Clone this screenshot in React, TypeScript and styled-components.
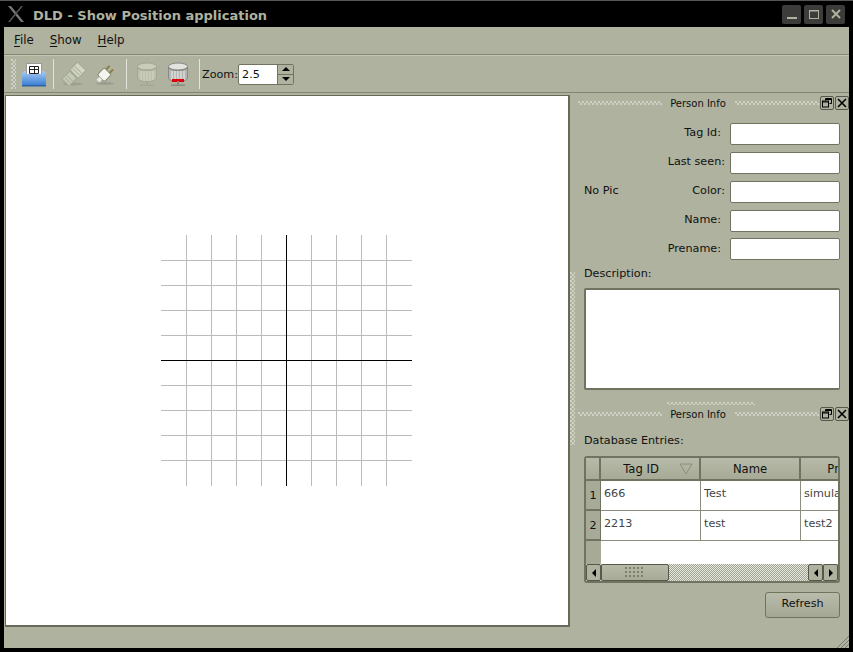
import * as React from "react";
import styled, { createGlobalStyle } from "styled-components";

const Global = createGlobalStyle`
  html, body { margin: 0; padding: 0; background: #000; }
  * { box-sizing: border-box; }
`;

const BG = "#aeb29f";

const Win = styled.div`
  width: 853px;
  height: 652px;
  background: #000;
  border-top: 1px solid #555;
  display: flex;
  flex-direction: column;
  font-family: "DejaVu Sans", sans-serif;
  font-size: 11.2px;
  color: #111;
  overflow: hidden;
`;

const TitleBar = styled.div`
  height: 26px;
  flex: none;
  display: flex;
  align-items: center;
  padding: 0 8px 0 7px;
  color: #aeb29f;
`;

const TitleText = styled.div`
  font-weight: bold;
  font-size: 13px;
  margin: 2px 0 0 8px;
`;

const WinButtons = styled.div`
  margin-left: auto;
  display: flex;
  gap: 3px;
`;

const WinButton = styled.div`
  width: 19px;
  height: 19px;
  background: #3c3c3a;
  border-radius: 2px;
  display: flex;
  align-items: center;
  justify-content: center;
`;

const Body = styled.div`
  flex: 1;
  margin: 0 4px 4px 4px;
  background: ${BG};
  display: flex;
  flex-direction: column;
  min-height: 0;
  position: relative;
`;

const MenuBar = styled.div`
  height: 28px;
  flex: none;
  display: flex;
  align-items: center;
  gap: 16px;
  padding: 0 0 2px 10px;
  border-bottom: 1px solid #82866f;
  box-shadow: 0 1px 0 #c4c7b7;
`;

const MenuItem = styled.span`
  font-size: 11.8px;
  & u { text-underline-offset: 2px; }
`;

const ToolBar = styled.div`
  height: 37px;
  flex: none;
  display: flex;
  align-items: center;
  padding-left: 7px;
  border-bottom: 1px solid #82866f;
  margin-top: 1px;
`;

const Grip = styled.div`
  background-image:
    radial-gradient(circle at 1px 1px, #d0d3c4 0.7px, transparent 0.9px),
    radial-gradient(circle at 3px 3px, #d0d3c4 0.7px, transparent 0.9px);
  background-size: 4px 4px;
`;

const ToolGrip = styled(Grip)`
  width: 5px;
  height: 30px;
`;

const ToolBtn = styled.div<{ $w?: number }>`
  width: ${(p) => p.$w ?? 31.5}px;
  height: 32px;
  display: flex;
  align-items: center;
  justify-content: center;
`;

const ToolSep = styled.div`
  width: 1px;
  height: 30px;
  background: #e3e5da;
  margin: 0 4px 0 5px;
`;

const ZoomLabel = styled.span`
  margin-left: -2px;
`;

const Spin = styled.div`
  width: 56px;
  height: 21px;
  display: flex;
  border: 1px solid #6f7360;
  border-radius: 2px;
  background: #fff;
`;

const SpinValue = styled.div`
  flex: 1;
  padding: 2px 0 0 3px;
  line-height: 15px;
`;

const SpinArrows = styled.div`
  width: 16px;
  display: flex;
  flex-direction: column;
  background: ${BG};
  border-left: 1px solid #6f7360;
`;

const SpinArrow = styled.div<{ $down?: boolean }>`
  flex: 1;
  display: flex;
  align-items: center;
  justify-content: center;
  border-top: ${(p) => (p.$down ? "1px solid #6f7360" : "none")};
  &::after {
    content: "";
    border-left: 4px solid transparent;
    border-right: 4px solid transparent;
    ${(p) => (p.$down ? "border-top: 4px solid #000;" : "border-bottom: 4px solid #000;")}
  }
`;

const Main = styled.div`
  flex: 1;
  display: flex;
  min-height: 0;
  padding: 2px 0 0 1px;
`;

const Canvas = styled.div`
  width: 565px;
  height: 532px;
  background: #fff;
  border: 1px solid #666a57;
  border-width: 1px 2px 2px 1px;
  flex: none;
`;

const PlotSvg = styled.svg`
  display: block;
`;

const Side = styled.div`
  flex: 1;
  display: flex;
  flex-direction: column;
  position: relative;
  padding-left: 2px;
  min-width: 0;
`;

const DockHead = styled.div`
  height: 16px;
  display: flex;
  align-items: center;
  padding-left: 6px;
`;

const DockGrip = styled(Grip)`
  flex: 1;
  height: 4px;
`;

const DockTitle = styled.span`
  font-size: 10px;
  margin: 0 9px 0 8px;
`;

const DockBtn = styled.div`
  width: 14px;
  height: 14px;
  border: 1px solid #55584a;
  border-radius: 2px;
  margin-left: 1px;
  display: flex;
  align-items: center;
  justify-content: center;
  flex: none;
`;

const VGrip = styled(Grip)`
  position: absolute;
  left: 0;
  top: 177px;
  width: 5px;
  height: 173px;
`;

const HGrip = styled(Grip)`
  width: 88px;
  height: 3px;
  margin: 12px auto 1px;
  flex: none;
`;

const InfoPanel = styled.div`
  padding: 12px 9px 0 12px;
`;

const InfoTop = styled.div`
  display: flex;
`;

const NoPic = styled.div`
  width: 60px;
  padding-top: 61px;
`;

const Fields = styled.div`
  flex: 1;
  display: grid;
  grid-template-columns: 1fr 110px;
  row-gap: 7px;
  align-items: center;
`;

const FieldLabel = styled.div<{ $pad: number }>`
  text-align: right;
  padding: 0 ${(p) => p.$pad}px 3px 0;
`;

const Field = styled.div`
  height: 22px;
  background: #fff;
  border: 1px solid #6f7360;
  border-radius: 2px;
  &:last-child {
    margin-top: -1px;
  }
`;

const SectionLabel = styled.div<{ $top: number }>`
  margin-top: ${(p) => p.$top}px;
  line-height: 15px;
`;

const TextBox = styled.div`
  margin-top: 7px;
  height: 102px;
  background: #fff;
  border: 1px solid #6f7360;
  border-width: 2px 1px 2px 2px;
  border-radius: 2px;
`;

const DbPanel = styled.div`
  padding: 4px 9px 0 12px;
  display: flex;
  flex-direction: column;
`;

const TableFrame = styled.div`
  margin-top: 8px;
  height: 127px;
  border: 2px solid #6f7360;
  border-radius: 3px;
  background: #fff;
  display: flex;
  flex-direction: column;
  overflow: hidden;
`;

const TableGrid = styled.div`
  flex: 1;
  display: grid;
  grid-template-columns: 15px 100px 100px 106px;
  grid-template-rows: 23px 30px 30px 1fr;
  min-height: 0;
  overflow: hidden;
`;

const HeadCell = styled.div<{ $sorted?: boolean }>`
  background: linear-gradient(#b7baa8, #a6aa96);
  border-right: 2px solid #6f7360;
  border-bottom: 2px solid #6f7360;
  display: flex;
  align-items: center;
  justify-content: center;
  padding-right: ${(p) => (p.$sorted ? 18 : 0)}px;
  position: relative;
  white-space: nowrap;
  overflow: hidden;
  font-size: 11.6px;
`;

const SortMark = styled.svg`
  position: absolute;
  right: 6px;
  top: 5px;
`;

const RowHead = styled.div`
  background: #a6aa96;
  border-bottom: 2px solid #6f7360;
  border-right: 1px solid #6f7360;
  display: flex;
  align-items: center;
  justify-content: center;
`;

const Cell = styled.div`
  border-right: 1px solid #8b8e7c;
  border-bottom: 1px solid #8b8e7c;
  padding: 6px 0 0 3px;
  color: #444;
  white-space: nowrap;
  overflow: hidden;
`;

const Filler = styled.div<{ $plain?: boolean }>`
  background: ${(p) => (p.$plain ? "#a6aa96" : "#fff")};
  grid-column: ${(p) => (p.$plain ? "auto" : "span 3")};
`;

const ScrollBar = styled.div`
  height: 17px;
  flex: none;
  display: flex;
  background-color: #aeb29f;
  background-image: repeating-conic-gradient(#a0a492 0 25%, #e6e7df 0 50%);
  background-size: 2px 2px;
`;

const ScrollBtn = styled.div<{ $right?: boolean }>`
  width: 15px;
  background: ${BG};
  border: 1px solid #55584a;
  border-radius: 2px;
  display: flex;
  align-items: center;
  justify-content: center;
  flex: none;
  &::after {
    content: "";
    border-top: 4px solid transparent;
    border-bottom: 4px solid transparent;
    ${(p) => (p.$right ? "border-left: 4px solid #000;" : "border-right: 4px solid #000;")}
  }
`;

const Thumb = styled.div`
  width: 68px;
  flex: none;
  background: linear-gradient(#b7baa8, #a6aa96);
  border: 1px solid #55584a;
  border-radius: 2px;
  display: flex;
  align-items: center;
  justify-content: center;
`;

const ThumbGrip = styled.div`
  width: 20px;
  height: 12px;
  background-image: radial-gradient(circle at 1px 1px, #7c806d 0.8px, transparent 1px);
  background-size: 4px 4px;
`;

const ScrollGap = styled.div`
  flex: 1;
`;

const RefreshRow = styled.div`
  display: flex;
  justify-content: flex-end;
  margin-top: 9px;
`;

const RefreshBtn = styled.div`
  width: 75px;
  height: 26px;
  border: 1px solid #6f7360;
  border-radius: 3px;
  background: linear-gradient(#b9bcab, #a3a793);
  display: flex;
  align-items: center;
  justify-content: center;
  padding-bottom: 3px;
`;

const StatusGrip = styled.svg`
  position: absolute;
  right: 0;
  bottom: 0;
`;

const xs = [186, 211, 236, 261, 311, 336, 361, 386];
const ys = [260, 285, 310, 335, 385, 410, 435, 460];

const Plot = () => (
  <PlotSvg width="562" height="529" viewBox="6 96 562 529">
    {xs.map((x) => (
      <line key={x} x1={x + 0.5} x2={x + 0.5} y1={235} y2={486} stroke="#bbb" />
    ))}
    {ys.map((y) => (
      <line key={y} y1={y + 0.5} y2={y + 0.5} x1={161} x2={412} stroke="#bbb" />
    ))}
    <line x1={286.5} x2={286.5} y1={235} y2={486} stroke="#000" />
    <line y1={360.5} y2={360.5} x1={161} x2={412} stroke="#000" />
  </PlotSvg>
);

const XLogo = () => (
  <svg width="18" height="18" viewBox="0 0 18 18">
    <path d="M1 1 L4 1 L17 17 L14 17 Z" fill="#777" />
    <path d="M16 1 L14 1 L1 17 L3 17 Z" fill="#555" />
  </svg>
);

const FolderIcon = () => (
  <svg width="30" height="25" viewBox="-4 0 30 25">
    <defs>
      <linearGradient id="fold" x1="0" y1="0" x2="0" y2="1">
        <stop offset="0" stopColor="#a8cdf4" />
        <stop offset="1" stopColor="#3d80d4" />
      </linearGradient>
    </defs>
    <rect x="5.5" y="1.5" width="15" height="13" fill="#fff" stroke="#999" />
    <path d="M8.5 4.5h9v7h-9z M8.5 7.5h9 M13.5 4.5v7" fill="none" stroke="#222" />
    <path d="M3 9h2v3h16V9h2l2 3v10a1 1 0 0 1-1 1H2a1 1 0 0 1-1-1V12z" fill="url(#fold)" />
    <rect x="1" y="23" width="24" height="1.5" fill="#2c62a8" />
  </svg>
);

const DimPlugIcon = () => (
  <svg width="26" height="24" viewBox="0 0 26 24">
    <ellipse cx="12" cy="22" rx="10" ry="1.5" fill="#9da18f" />
    <g transform="rotate(-45 13 12)">
      <rect x="1" y="7" width="11" height="10" rx="1" fill="#c5cab4" stroke="#a3a793" />
      <rect x="13" y="6" width="11" height="12" rx="1" fill="#d2d6c4" stroke="#a3a793" />
      <path d="M16 7v10M19 7v10M4 8v8M7 8v8" stroke="#aeb29f" />
    </g>
  </svg>
);

const PlugIcon = () => (
  <svg width="22" height="22" viewBox="0 0 22 22">
    <ellipse cx="11" cy="20.5" rx="9" ry="1.5" fill="#9a9d8c" />
    <g transform="rotate(45 11 11)">
      <rect x="6" y="7" width="10" height="10" rx="2" fill="#f4f4f0" stroke="#8a8d7c" />
      <rect x="7.5" y="2" width="2" height="5" fill="#8f7c3f" />
      <rect x="12.5" y="2" width="2" height="5" fill="#8f7c3f" />
      <rect x="9" y="17" width="4" height="4" fill="#e8e8e2" />
    </g>
  </svg>
);

const DbIcon = ({ active }: { active?: boolean }) => (
  <svg width="22" height="25" viewBox="0 0 22 25">
    <ellipse cx="11" cy="4.5" rx="9.5" ry="3.5" fill={active ? "#e2e2de" : "#c8ccb8"} stroke={active ? "#888" : "#a3a793"} />
    <path d="M1.5 5v11c0 2 4 3.5 9.5 3.5s9.5-1.5 9.5-3.5V5c0 2-4 3.5-9.5 3.5S1.5 7 1.5 5z" fill={active ? "#b5b5b2" : "#bcc0ab"} stroke={active ? "#888" : "#a3a793"} />
    <path d="M5 9v9M8 9v10M11 9v10M14 9v10M17 9v9" stroke={active ? "#eee" : "#d3d6c6"} />
    {active ? <rect x="5" y="17" width="12" height="3" fill="#e0000a" /> : null}
    <path d="M11 19v4" stroke={active ? "#8a8d7c" : "#a3a793"} strokeWidth="2" />
    <rect x="4" y="22.5" width="14" height="1.5" fill={active ? "#8a8d7c" : "#a3a793"} />
  </svg>
);

const FloatIcon = () => (
  <svg width="10" height="10" viewBox="0 0 10 10" fill="none" stroke="#000">
    <path d="M3.5 2.5V.5h6v5h-2" />
    <rect x=".5" y="3" width="6" height="6" />
    <path d="M3.5 1.5h6M.5 4h6" />
  </svg>
);

const CloseIcon = () => (
  <svg width="10" height="10" viewBox="0 0 10 10" stroke="#000" strokeWidth="1.6">
    <path d="M1 1l8 8M9 1L1 9" />
  </svg>
);

const DockHeader = () => (
  <DockHead>
    <DockGrip />
    <DockTitle>Person Info</DockTitle>
    <DockGrip />
    <DockBtn><FloatIcon /></DockBtn>
    <DockBtn><CloseIcon /></DockBtn>
  </DockHead>
);

const fields: [string, number][] = [
  ["Tag Id:", 9],
  ["Last seen:", 5],
  ["Color:", 5],
  ["Name:", 9],
  ["Prename:", 9],
];

export default function App() {
  return (
    <Win>
      <Global />
      <TitleBar>
        <XLogo />
        <TitleText>DLD - Show Position application</TitleText>
        <WinButtons>
          <WinButton>
            <svg width="12" height="12" viewBox="0 0 12 12"><rect x="1" y="9" width="10" height="2" fill="#aeb29f" /></svg>
          </WinButton>
          <WinButton>
            <svg width="12" height="12" viewBox="0 0 12 12" fill="none" stroke="#aeb29f"><rect x="1.5" y="2.5" width="9" height="8" /><path d="M1.5 3h9" /></svg>
          </WinButton>
          <WinButton>
            <svg width="12" height="12" viewBox="0 0 12 12" stroke="#aeb29f" strokeWidth="2"><path d="M2 2l8 8M10 2l-8 8" /></svg>
          </WinButton>
        </WinButtons>
      </TitleBar>
      <Body>
        <MenuBar>
          <MenuItem><u>F</u>ile</MenuItem>
          <MenuItem><u>S</u>how</MenuItem>
          <MenuItem><u>H</u>elp</MenuItem>
        </MenuBar>
        <ToolBar>
          <ToolGrip />
          <ToolBtn $w={32}><FolderIcon /></ToolBtn>
          <ToolSep />
          <ToolBtn><DimPlugIcon /></ToolBtn>
          <ToolBtn><PlugIcon /></ToolBtn>
          <ToolSep />
          <ToolBtn><DbIcon /></ToolBtn>
          <ToolBtn><DbIcon active /></ToolBtn>
          <ToolSep />
          <ZoomLabel>Zoom:</ZoomLabel>
          <Spin>
            <SpinValue>2.5</SpinValue>
            <SpinArrows>
              <SpinArrow />
              <SpinArrow $down />
            </SpinArrows>
          </Spin>
        </ToolBar>
        <Main>
          <Canvas><Plot /></Canvas>
          <Side>
            <VGrip />
            <DockHeader />
            <InfoPanel>
              <InfoTop>
                <NoPic>No Pic</NoPic>
                <Fields>
                  {fields.map(([label, pad]) => (
                    <React.Fragment key={label}>
                      <FieldLabel $pad={pad}>{label}</FieldLabel>
                      <Field />
                    </React.Fragment>
                  ))}
                </Fields>
              </InfoTop>
              <SectionLabel $top={6}>Description:</SectionLabel>
              <TextBox />
            </InfoPanel>
            <HGrip />
            <DockHeader />
            <DbPanel>
              <SectionLabel $top={7}>Database Entries:</SectionLabel>
              <TableFrame>
                <TableGrid>
                  <HeadCell />
                  <HeadCell $sorted>
                    Tag ID
                    <SortMark width="14" height="12" viewBox="0 0 14 12"><path d="M1 1h12L7 11z" fill="none" stroke="#8b8e7c" /></SortMark>
                  </HeadCell>
                  <HeadCell>Name</HeadCell>
                  <HeadCell>Prename</HeadCell>
                  <RowHead>1</RowHead>
                  <Cell>666</Cell>
                  <Cell>Test</Cell>
                  <Cell>simulation</Cell>
                  <RowHead>2</RowHead>
                  <Cell>2213</Cell>
                  <Cell>test</Cell>
                  <Cell>test2</Cell>
                  <Filler $plain />
                  <Filler />
                </TableGrid>
                <ScrollBar>
                  <ScrollBtn />
                  <Thumb><ThumbGrip /></Thumb>
                  <ScrollGap />
                  <ScrollBtn />
                  <ScrollBtn $right />
                </ScrollBar>
              </TableFrame>
              <RefreshRow>
                <RefreshBtn>Refresh</RefreshBtn>
              </RefreshRow>
            </DbPanel>
          </Side>
        </Main>
        <StatusGrip width="12" height="12" viewBox="0 0 12 12" stroke="#777">
          <path d="M12 0L0 12M12 4L4 12M12 8L8 12" />
        </StatusGrip>
      </Body>
    </Win>
  );
}
